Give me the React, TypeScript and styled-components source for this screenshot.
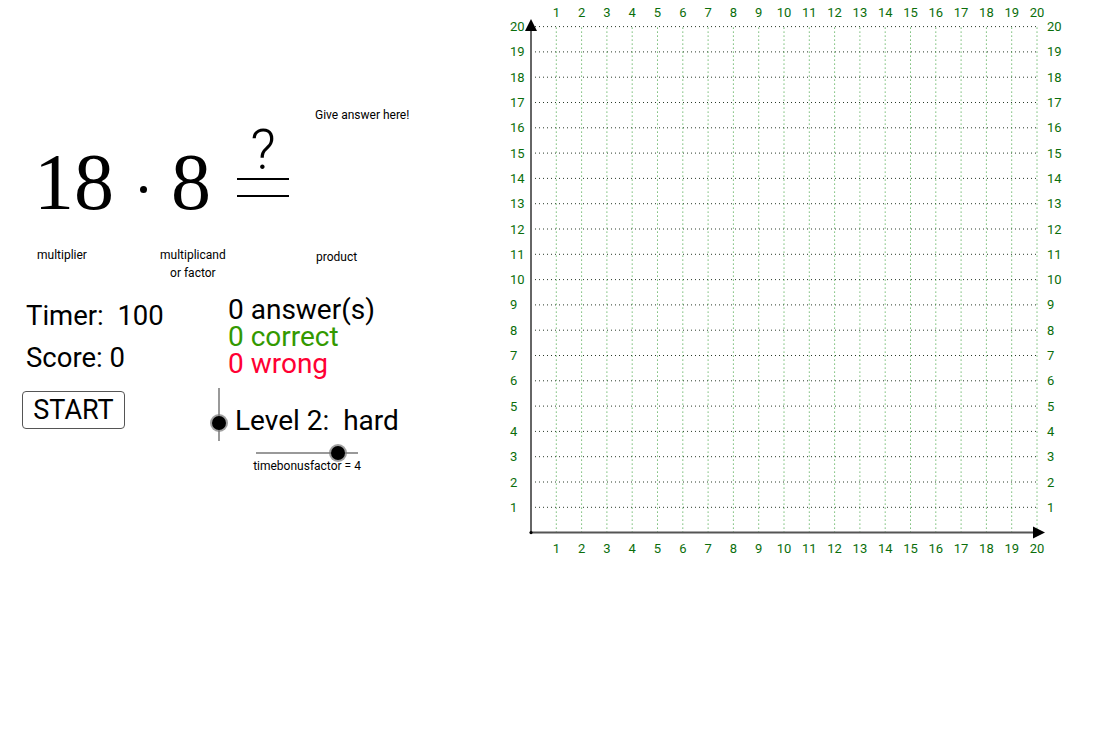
import React from 'react';
import styled, { createGlobalStyle } from 'styled-components';

const GlobalStyle = createGlobalStyle`
    html, body {
        margin: 0;
        padding: 0;
        background: #fff;
    }
    body {
        font-family: Roboto, 'Liberation Sans', sans-serif;
        color: #000;
    }
`;

const ORIGIN_X = 36;
const ORIGIN_Y = 532.6;
const STEP = 25.3;
const TICKS = Array.from({ length: 20 }, (_, i) => i + 1);
const LABEL_GREEN = '#0b6e0b';

const Grid = () => {
    const right = ORIGIN_X + 20 * STEP;
    const top = ORIGIN_Y - 20 * STEP;
    return (
        <Chart width={604} height={560} viewBox="0 0 604 560">
            {TICKS.map((n) => (
                <line
                    key={'h' + n}
                    x1={ORIGIN_X}
                    x2={right}
                    y1={ORIGIN_Y - n * STEP}
                    y2={ORIGIN_Y - n * STEP}
                    stroke="#2a3a2a"
                    strokeWidth={1}
                    strokeDasharray="1 3"
                />
            ))}
            {TICKS.map((n) => (
                <line
                    key={'v' + n}
                    x1={ORIGIN_X + n * STEP}
                    x2={ORIGIN_X + n * STEP}
                    y1={ORIGIN_Y}
                    y2={top}
                    stroke="#2f9a2f"
                    strokeWidth={1}
                    strokeDasharray="1 3"
                />
            ))}
            <line x1={ORIGIN_X} y1={ORIGIN_Y} x2={ORIGIN_X} y2={26} stroke="#666" strokeWidth={2} />
            <line x1={ORIGIN_X} y1={ORIGIN_Y} x2={542} y2={ORIGIN_Y} stroke="#555" strokeWidth={2} />
            <polygon points={`${ORIGIN_X - 6},31 ${ORIGIN_X + 6},31 ${ORIGIN_X},19`} fill="#000" />
            <polygon points="538,526.6 538,538.6 550,532.6" fill="#000" />
            <circle cx={ORIGIN_X} cy={ORIGIN_Y} r={1.6} fill="#000" />
            {TICKS.map((n) => (
                <g key={'l' + n} fontSize={13} fill={LABEL_GREEN} fontFamily="Roboto, sans-serif">
                    <text x={ORIGIN_X + n * STEP} y={17} textAnchor="middle">{n}</text>
                    <text x={ORIGIN_X + n * STEP} y={553} textAnchor="middle">{n}</text>
                    <text x={15} y={ORIGIN_Y - n * STEP + 4.5}>{n}</text>
                    <text x={552} y={ORIGIN_Y - n * STEP + 4.5}>{n}</text>
                </g>
            ))}
        </Chart>
    );
};

const App = () => {
    return (
        <>
            <GlobalStyle />
            <Page>
                <LeftPanel>
                    <Hint>Give answer here!</Hint>
                    <Equation>
                        <BigNumber $left={34}>18</BigNumber>
                        <Dot />
                        <BigNumber $left={24}>8</BigNumber>
                        <QuestionEquals>
                            <Question>?</Question>
                            <Bar />
                            <Bar $gap={15} />
                        </QuestionEquals>
                    </Equation>
                    <Labels>
                        <SmallLabel>multiplier</SmallLabel>
                        <SmallLabel $center>
                            multiplicand
                            <br />
                            or factor
                        </SmallLabel>
                        <SmallLabel $offset={2}>product</SmallLabel>
                    </Labels>
                    <Stats>
                        <LeftStats>
                            <StatLine>Timer:  100</StatLine>
                            <StatLine>Score: 0</StatLine>
                            <StartButton>START</StartButton>
                        </LeftStats>
                        <RightStats>
                            <Counter>0 answer(s)</Counter>
                            <Counter $color="#339900">0 correct</Counter>
                            <Counter $color="#ff0033">0 wrong</Counter>
                            <LevelRow>
                                <VerticalSlider>
                                    <VerticalTrack />
                                    <Thumb style={{ left: 0, top: 28 }} />
                                </VerticalSlider>
                                <LevelText>Level 2:  hard</LevelText>
                            </LevelRow>
                            <BonusSlider>
                                <HorizontalSlider>
                                    <HorizontalTrack />
                                    <Thumb style={{ left: 75, top: 0 }} />
                                </HorizontalSlider>
                                <SliderCaption>timebonusfactor = 4</SliderCaption>
                            </BonusSlider>
                        </RightStats>
                    </Stats>
                </LeftPanel>
                <Grid />
            </Page>
        </>
    );
};

export default App;

const Page = styled.div`
    display: flex;
    width: 1099px;
    height: 734px;
    overflow: hidden;
`;

const LeftPanel = styled.div`
    width: 495px;
    flex-shrink: 0;
    display: flex;
    flex-direction: column;
    padding-top: 108px;
    box-sizing: border-box;
`;

const Chart = styled.svg`
    display: block;
    flex-shrink: 0;
`;

const Hint = styled.div`
    margin-left: 315px;
    font-size: 12px;
    line-height: 14px;
`;

const Equation = styled.div`
    display: flex;
    align-items: flex-start;
    height: 100px;
`;

const BigNumber = styled.span<{ $left: number }>`
    margin-left: ${(p) => p.$left}px;
    margin-top: 20px;
    font-family: 'Liberation Serif', serif;
    font-size: 80px;
    line-height: 80px;
`;

const Dot = styled.span`
    width: 7px;
    height: 7px;
    border-radius: 50%;
    background: #000;
    margin-left: 26px;
    margin-top: 64px;
`;

const QuestionEquals = styled.div`
    display: flex;
    flex-direction: column;
    align-items: center;
    width: 52px;
    margin-left: 26px;
`;

const Question = styled.span`
    font-size: 56px;
    line-height: 56px;
    font-weight: 300;
`;

const Bar = styled.div<{ $gap?: number }>`
    width: 52px;
    height: 2px;
    background: #000;
    margin-top: ${(p) => p.$gap ?? 0}px;
`;

const Labels = styled.div`
    display: grid;
    grid-template-columns: 123px 156px auto;
    align-items: start;
    padding-left: 37px;
    margin-top: 24px;
`;

const SmallLabel = styled.div<{ $center?: boolean; $offset?: number }>`
    font-size: 12px;
    line-height: 18px;
    justify-self: start;
    text-align: ${(p) => (p.$center ? 'center' : 'left')};
    margin-top: ${(p) => p.$offset ?? 0}px;
`;

const Stats = styled.div`
    display: grid;
    grid-template-columns: 202px 1fr;
    padding-left: 26px;
    margin-top: 13px;
`;

const LeftStats = styled.div`
    display: flex;
    flex-direction: column;
    align-items: flex-start;
`;

const StatLine = styled.div`
    font-size: 27.5px;
    line-height: 42px;
    white-space: pre;
`;

const StartButton = styled.button`
    margin: 12px 0 0 -4px;
    width: 103px;
    height: 38px;
    padding: 0;
    border: 1px solid #555;
    border-radius: 4px;
    background: #fff;
    font-family: Roboto, 'Liberation Sans', sans-serif;
    font-size: 27px;
    color: #000;
    line-height: 36px;
`;

const RightStats = styled.div`
    display: flex;
    flex-direction: column;
    padding-top: 1px;
`;

const Counter = styled.div<{ $color?: string }>`
    font-size: 28px;
    line-height: 27px;
    color: ${(p) => p.$color ?? '#000'};
`;

const LevelRow = styled.div`
    display: flex;
    align-items: flex-start;
    margin: 11px 0 0 -16px;
    height: 53px;
`;

const VerticalSlider = styled.div`
    position: relative;
    width: 14px;
    height: 53px;
    flex-shrink: 0;
`;

const VerticalTrack = styled.div`
    position: absolute;
    left: 6px;
    top: 0;
    width: 2px;
    height: 100%;
    background: #999;
`;

const Thumb = styled.div`
    position: absolute;
    width: 14px;
    height: 14px;
    box-sizing: border-box;
    border-radius: 50%;
    background: #000;
    box-shadow: 0 0 0 2px rgba(120, 120, 120, 0.7);
`;

const LevelText = styled.div`
    margin: 18px 0 0 9px;
    font-size: 28px;
    line-height: 30px;
    white-space: pre;
`;

const BonusSlider = styled.div`
    display: flex;
    flex-direction: column;
    align-items: center;
    width: 102px;
    margin: 5px 0 0 28px;
`;

const HorizontalSlider = styled.div`
    position: relative;
    width: 102px;
    height: 14px;
`;

const HorizontalTrack = styled.div`
    position: absolute;
    left: 0;
    top: 6px;
    width: 100%;
    height: 2px;
    background: #999;
`;

const SliderCaption = styled.div`
    margin-top: -1px;
    font-size: 12px;
    line-height: 14px;
    white-space: nowrap;
`;
